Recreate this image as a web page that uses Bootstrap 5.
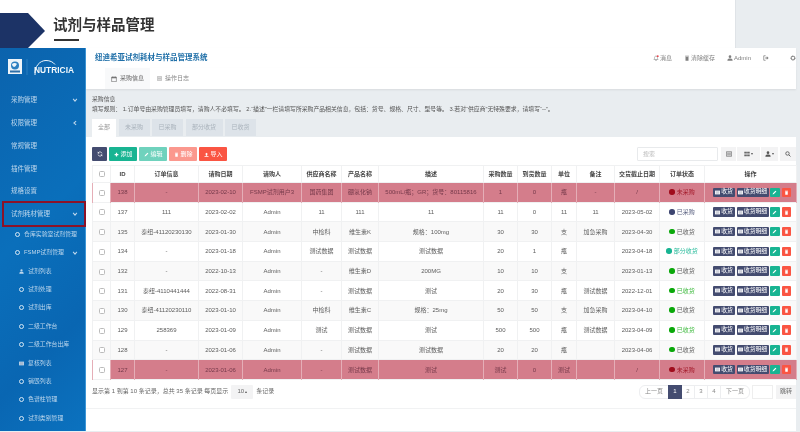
<!DOCTYPE html>
<html lang="zh-CN">
<head>
  <meta charset="UTF-8">
  <title>试剂与样品管理</title>
  <meta name="viewport" content="width=device-width, initial-scale=1">
  <link href="https://cdn.jsdelivr.net/npm/bootstrap@5.3.0/dist/css/bootstrap.min.css" rel="stylesheet">
  <style>
    html, body { height: 100%; }
    body {
      margin: 0;
      overflow: hidden;
      background: #e9edf0;
      font-family: "Liberation Sans", "Noto Sans CJK SC", sans-serif;
      font-size: 6px;
      color: #666;
      filter: blur(.4px);
    }
    svg { display: inline-block; vertical-align: -1px; }

    /* slide title */
    .slide-head { height: 48px; background: #fff; }
    .slide-arrow { margin-top: 13px; }
    .slide-title { margin: 16px 0 0 8px; }
    .slide-title h1 { margin: 0; font-size: 14.5px; line-height: 18px; font-weight: 700; color: #333; }
    .slide-title i { display: block; width: 25px; height: 2px; margin: 5px 0 0 1px; background: #333; }
    .slide-side { width: 65px; background: #e9edf0; border-left: 1px solid #dfe3e7; }

    /* app */
    .app-wrap { height: 383px; margin-right: 4px; }
    .side-menu {
      width: 86px; flex: none;
      background: linear-gradient(135deg, #0b63ad, #0a6fbb 45%, #0966b2 75%, #0b72bf);
      border-right: 1px solid #3d96d6;
      color: #bcd6ec;
    }
    .side-logo { height: 41px; padding: 11px 0 0 8px; }
    .logo-badge { width: 14px; height: 15px; background: #eef4f9; display: flex; align-items: center; justify-content: center; }
    .nutri-name { position: absolute; left: 2px; top: 6px; font-size: 8.4px; font-weight: 700; color: #f2f8fc; line-height: 11px; }
    .menu-one { height: 22.7px; padding: 0 7px 0 11px; font-size: 6.5px; position: relative; }
    .menu-on::after {
      content: ""; position: absolute; left: 2px; top: -1px; right: -1px; bottom: -2px;
      border: 2.5px solid #8c1228;
    }
    .menu-sub { height: 18.4px; font-size: 5.9px; padding-right: 7px; }
    .lv2 { padding-left: 15px; }
    .lv3 { padding-left: 19px; }
    .ring { width: 5px; height: 5px; border: 1.2px solid #d6e7f4; border-radius: 50%; flex: none; margin-right: 4px; }
    .lv3 svg.sub-ico { width: 5px; height: 5px; margin-right: 4px; flex: none; }

    .main-area { min-width: 0; background: #fff; }
    .top-bar { height: 20px; padding: 0 0 0 9px; background: #fff; box-shadow: 0 1px 2px rgba(0,0,0,.06); position: relative; }
    .sys-name { font-size: 7.5px; font-weight: 700; color: #1f6fa8; }
    .top-link { margin-left: 12px; font-size: 6px; color: #808080; display: flex; align-items: center; gap: 1px; }
    .top-cog { margin-left: 21px; color: #777; }
    .tab-bar { height: 21px; padding-left: 19px; background: #fff; box-shadow: 0 1px 2px rgba(0,0,0,.08); position: relative; }
    .tab-one { padding: 0 7px; font-size: 6px; color: #888; display: flex; align-items: center; gap: 3px; white-space: nowrap; }
    .tab-live { width: 45px; padding: 0; justify-content: center; background: #f8f9fa; color: #666; }

    .info-area { height: 48px; background: #e9edf0; padding: 6px 0 0 6px; }
    .info-area p { margin: 0; font-size: 5.85px; line-height: 9.5px; color: #555; }
    .state-tabs { margin-top: 5px; gap: 2.5px; font-size: 6px; }
    .state-tabs span { height: 17px; padding: 0 6.5px; display: flex; align-items: center; background: #dde3e9; color: #a9b2bb; }
    .state-tabs .state-live { background: #fff; color: #999; padding: 0 6px; height: 17.5px; }

    .panel-area { padding: 10px 0 0 6px; background: #fff; }
    .tool-row { height: 14px; margin-bottom: 4px; }
    .tool-left { gap: 2px; }
    .mini-btn {
      --bs-btn-padding-x: 4.5px; --bs-btn-padding-y: 0; --bs-btn-font-size: 6px; --bs-btn-border-radius: 1px;
      height: 14px; border: 0; color: #fff; display: inline-flex; align-items: center; gap: 2px; opacity: 1;
    }
    .btn-navy { background: #444c70; }
    .btn-mint { background: #18b492; }
    .btn-mint-off { background: #6fd2bd; }
    .btn-rose-off { background: #fb988e; }
    .btn-tomato { background: #fa5543; }
    .search-box { width: 81px; height: 14px; min-height: 0; padding: 0 5px; font-size: 6px; border-radius: 1px; border: 1px solid #e8eaec; margin-right: 3px; }
    .search-box::placeholder { color: #bbb; }
    .grey-btn { height: 14px; background: #f3f3f4; border: 0; padding: 0; display: inline-flex; align-items: center; justify-content: center; gap: 1px; color: #555; }
    .col-a { width: 16px; border-right: 1px solid #fff; }
    .col-b { width: 23px; }
    .col-c { width: 18px; border-left: 1px solid #fff; }
    .col-d { width: 16px; margin-left: 2px; }
    .caret-mini { width: 0; height: 0; border: 1.5px solid transparent; border-top: 2px solid #555; border-bottom: 0; }
    .caret-up { border-top: 0; border-bottom: 2px solid #555; }

    .order-table { table-layout: fixed; width: 704px; margin: 0; font-size: 6px; --bs-table-color: #5c5c5c; --bs-table-striped-bg: #f9f9f9; --bs-table-striped-color: #5c5c5c; --bs-table-border-color: #f0f1f2; }
    .order-table th, .order-table td { padding: 0; text-align: center; vertical-align: middle; white-space: nowrap; overflow: hidden; height: 19.7px; line-height: 8px; }
    .order-table th { height: 17px; color: #444; font-weight: 700; }
    .order-table input { width: 6px; height: 6px; margin: 0; border-color: #bbb; border-radius: 1px; vertical-align: middle; }
    .c-chk { width: 18px; } .c-id { width: 24px; } .c-ord { width: 64px; } .c-date { width: 44px; }
    .c-user { width: 59px; } .c-sup { width: 40px; } .c-prod { width: 37px; } .c-desc { width: 105px; }
    .c-num { width: 34px; } .c-unit { width: 25px; } .c-note { width: 38px; } .c-end { width: 45px; } .c-op { width: 92px; }
    .order-table tr.row-pink td { background: #d47d8b; box-shadow: none; color: #75394a; border-color: #e5aeb7; }
    .order-table tr.row-pink td.chk-cell { background: #fff; }
    .dot { display: inline-block; width: 5.5px; height: 5.5px; border-radius: 50%; margin-right: 2px; vertical-align: -.5px; }
    .st-red { color: #a31a2a; } .st-red .dot { background: #a00d1d; }
    .st-navy { color: #5a6180; } .st-navy .dot { background: #3d4570; }
    .st-green { color: #3cb93c; } .st-green .dot { background: #0aa80a; }
    .st-teal { color: #27bb9b; } .st-teal .dot { background: #18b492; }
    .order-table tr.row-pink td.st-red { color: #a31a2a; }
    .op-btns { gap: 1.5px; padding-left: 8px; }
    .op-btn { height: 9.5px; border-radius: 1px; color: #fff; display: inline-flex; align-items: center; justify-content: center; gap: 1px; font-size: 5.8px; font-weight: 400; line-height: 1; }
    .op-get { width: 22px; background: #444c70; }
    .op-list { width: 32px; background: #444c70; }
    .op-edit { width: 9.5px; background: #18b492; }
    .op-del { width: 9px; background: #fa5543; margin-left: 1px; }

    .foot-row { height: 14px; margin-top: 5px; }
    .size-btn { width: 22px; height: 14.5px; margin: 0 3px; background: #f3f3f4; border-radius: 1px; display: inline-flex; align-items: center; justify-content: center; gap: 1px; color: #666; }
    .pager { margin: 0; }
    .pager .page-link { height: 14.5px; padding: 0 5px; display: flex; align-items: center; font-size: 6px; color: #888; border-color: #edeef0; border-radius: 0; background: #fff; }
    .pager .active .page-link { background: #444c70; border-color: #444c70; color: #fff; }
    .w-num .page-link { width: 14px; justify-content: center; padding: 0; }
    .jump-box { width: 21px; height: 14.5px; margin: 0 3px 0 2px; border: 1px solid #eee; background: #fff; }
    .jump-btn { width: 20px; height: 14.5px; background: #f3f3f4; display: flex; align-items: center; justify-content: center; color: #666; }
    .foot-line { height: 1px; background: #f1f2f3; margin: 9px 0 0 -6px; }
  </style>
</head>
<body>

  <svg width="0" height="0" class="position-absolute">
    <symbol id="i-down" viewBox="0 0 8 8"><polyline points="1.5,2.5 4,5.5 6.5,2.5" fill="none" stroke="currentColor" stroke-width="1.4"/></symbol>
    <symbol id="i-left" viewBox="0 0 8 8"><polyline points="5.5,1.5 2.5,4 5.5,6.5" fill="none" stroke="currentColor" stroke-width="1.4"/></symbol>
    <symbol id="i-list" viewBox="0 0 8 8"><path d="M0 1h8v6H0z" fill="currentColor"/><path d="M1 2.500h6M1 4h6M1 5.500h6" stroke="#8a90a8" stroke-width=".6"/></symbol>
    <symbol id="i-pen" viewBox="0 0 8 8"><path d="M1 7l.5-2 4-4 1.500 1.500-4 4z" fill="currentColor"/></symbol>
    <symbol id="i-trash" viewBox="0 0 8 8"><path d="M1.500 1h5v1h-5zM2 2.500h4V7.500H2z" fill="currentColor"/></symbol>
    <symbol id="i-user" viewBox="0 0 8 8"><circle cx="4" cy="2.200" r="1.800" fill="currentColor"/><path d="M.5 7.500c0-2.500 1.500-3 3.500-3s3.500.5 3.500 3z" fill="currentColor"/></symbol>
    <symbol id="i-up" viewBox="0 0 8 8"><path d="M4 1l2.500 2.500H5V6H3V3.500H1.500zM.8 6.300h6.400v1.200H.8z" fill="currentColor"/></symbol>
    <symbol id="i-plus" viewBox="0 0 8 8"><path d="M3 1h2v2h2v2H5v2H3V5H1V3h2z" fill="currentColor"/></symbol>
    <symbol id="i-grid" viewBox="0 0 8 8"><path d="M.5 1h2v1.500h-2zM3 1h2v1.500H3zM5.500 1h2v1.500h-2zM.5 3.200h2v1.500h-2zM3 3.200h2v1.500H3zM5.500 3.200h2v1.500h-2zM.5 5.400h2v1.500h-2zM3 5.400h2v1.500H3zM5.500 5.400h2v1.500h-2z" fill="currentColor"/></symbol>
    <symbol id="i-cal" viewBox="0 0 8 8"><path d="M.8 1.500h6.400v6H.8z" fill="none" stroke="currentColor" stroke-width=".8"/><path d="M.8 1.500h6.400v1.500H.8zM2 .5h1v1.500H2zM5 .5h1v1.500H5z" fill="currentColor"/></symbol>
    <symbol id="i-log" viewBox="0 0 8 8"><path d="M.5 1h7v6h-7z" fill="none" stroke="currentColor" stroke-width=".8"/><path d="M1.500 2.800h5M1.500 4h5M1.500 5.200h5" stroke="currentColor" stroke-width=".6"/></symbol>
    <symbol id="i-bell" viewBox="0 0 8 8"><path d="M1.200 6c.8-.8.8-1.500.8-2.500 0-1.300.8-2 2-2s2 .7 2 2c0 1 0 1.700.8 2.500zM3.200 6.600h1.600L4 7.600z" fill="none" stroke="currentColor" stroke-width=".7"/><circle cx="6.300" cy="1.500" r="1.300" fill="#e8414a"/></symbol>
    <symbol id="i-exit" viewBox="0 0 8 8"><path d="M3.500 1H1v6h2.500" fill="none" stroke="currentColor" stroke-width="1"/><path d="M3 3.200h2V1.800L7.500 4 5 6.200V4.800H3z" fill="currentColor"/></symbol>
    <symbol id="i-cog" viewBox="0 0 8 8"><circle cx="4" cy="4" r="2.400" fill="none" stroke="currentColor" stroke-width="1.400" stroke-dasharray="1.200 .3"/><circle cx="4" cy="4" r="2.900" fill="none" stroke="currentColor" stroke-width=".8" stroke-dasharray="1.100 1.200"/></symbol>
    <symbol id="i-sync" viewBox="0 0 8 8"><path d="M6.600 3.200A2.800 2.800 0 0 0 1.800 2.200M1.400 4.800a2.800 2.800 0 0 0 4.800 1" fill="none" stroke="currentColor" stroke-width="1"/><path d="M1 .8v2.400h2.400zM7 7.200V4.800H4.600z" fill="currentColor"/></symbol>
  </svg>

  <div class="slide-head d-flex">
    <svg class="slide-arrow" width="45" height="35" viewBox="0 0 45 35"><polygon points="0,0 28,0 45,18 28,35 0,35" fill="#1c3366"/></svg>
    <div class="slide-title">
      <h1>试剂与样品管理</h1>
      <i></i>
    </div>
    <div class="slide-side ms-auto"></div>
  </div>

  <div class="app-wrap d-flex">
    <aside class="side-menu">
      <div class="side-logo d-flex">
        <div class="logo-badge">
          <svg width="10" height="12" viewBox="0 0 10 12"><circle cx="5" cy="4.500" r="4" fill="#2d7fc0"/><path d="M2 3c2-1.500 4-1 5 0-1 1-1 2.500-3 3-1-.5-2-1.500-2-3z" fill="#eef4f9"/><rect x="0" y="9.500" width="10" height="2" fill="#2d6fa8"/></svg>
        </div>
        <svg class="ms-1" width="6" height="16" viewBox="0 0 6 16"><path d="M1 0v16" stroke="#5ea3d8" stroke-width=".4"/></svg>
        <div class="position-relative">
          <svg class="d-block" width="44" height="18" viewBox="0 0 44 18"><path d="M3 16C2.500 7 8 1.500 14 1.500c4 0 7 1.500 9 4" fill="none" stroke="#eef6fc" stroke-width="1"/></svg>
          <span class="nutri-name">NUTRICIA</span>
        </div>
      </div>
      <div class="menu-one d-flex align-items-center justify-content-between"><span>采购管理</span><svg width="6" height="6"><use href="#i-down"/></svg></div>
      <div class="menu-one d-flex align-items-center justify-content-between"><span>权限管理</span><svg width="6" height="6"><use href="#i-left"/></svg></div>
      <div class="menu-one d-flex align-items-center"><span>常规管理</span></div>
      <div class="menu-one d-flex align-items-center"><span>插件管理</span></div>
      <div class="menu-one d-flex align-items-center"><span>规格设置</span></div>
      <div class="menu-one menu-on d-flex align-items-center justify-content-between"><span>试剂耗材管理</span><svg width="6" height="6"><use href="#i-down"/></svg></div>
      <div class="menu-sub lv2 d-flex align-items-center"><i class="ring"></i>仓库实验室试剂管理</div>
      <div class="menu-sub lv2 d-flex align-items-center"><i class="ring"></i>FSMP试剂管理<svg class="ms-auto" width="6" height="6"><use href="#i-down"/></svg></div>
      <div class="menu-sub lv3 d-flex align-items-center"><svg class="sub-ico"><use href="#i-user"/></svg>试剂列表</div>
      <div class="menu-sub lv3 d-flex align-items-center"><i class="ring"></i>试剂处理</div>
      <div class="menu-sub lv3 d-flex align-items-center"><i class="ring"></i>试剂出库</div>
      <div class="menu-sub lv3 d-flex align-items-center"><i class="ring"></i>二级工作台</div>
      <div class="menu-sub lv3 d-flex align-items-center"><i class="ring"></i>二级工作台出库</div>
      <div class="menu-sub lv3 d-flex align-items-center"><svg class="sub-ico"><use href="#i-list"/></svg>复核列表</div>
      <div class="menu-sub lv3 d-flex align-items-center"><i class="ring"></i>销毁列表</div>
      <div class="menu-sub lv3 d-flex align-items-center"><i class="ring"></i>色谱柱管理</div>
      <div class="menu-sub lv3 d-flex align-items-center"><i class="ring"></i>试剂类别管理</div>
    </aside>

    <main class="main-area flex-grow-1">
      <div class="top-bar d-flex align-items-center">
        <span class="sys-name me-auto">纽迪希亚试剂耗材与样品管理系统</span>
        <span class="top-link"><svg width="6" height="6"><use href="#i-bell"/></svg>消息</span>
        <span class="top-link"><svg width="6" height="6"><use href="#i-trash"/></svg>清除缓存</span>
        <span class="top-link"><svg width="6" height="6"><use href="#i-user"/></svg>Admin</span>
        <span class="top-link"><svg width="6" height="6"><use href="#i-exit"/></svg></span>
        <span class="top-cog"><svg width="6" height="6"><use href="#i-cog"/></svg></span>
      </div>
      <div class="tab-bar d-flex">
        <div class="tab-one tab-live"><svg width="6" height="6"><use href="#i-cal"/></svg>采购信息</div>
        <div class="tab-one"><svg width="5" height="5"><use href="#i-log"/></svg>操作日志</div>
      </div>
      <div class="info-area">
        <p>采购信息</p>
        <p>填写规则： 1.订单号由采购管理员填写，请购人不必填写。 2.“描述”一栏请填写所采购产品相关信息，包括：货号、规格、尺寸、型号等。 3.若对“供应商”无特殊要求，请填写“--”。</p>
        <div class="state-tabs d-flex">
          <span class="state-live">全部</span><span>未采购</span><span>已采购</span><span>部分收货</span><span>已收货</span>
        </div>
      </div>
      <div class="panel-area">
        <div class="tool-row d-flex align-items-center justify-content-between">
          <div class="tool-left d-flex">
            <span class="btn mini-btn btn-navy"><svg width="6" height="6"><use href="#i-sync"/></svg></span>
            <span class="btn mini-btn btn-mint"><svg width="5" height="5"><use href="#i-plus"/></svg>添加</span>
            <span class="btn mini-btn btn-mint-off"><svg width="5" height="5"><use href="#i-pen"/></svg>编辑</span>
            <span class="btn mini-btn btn-rose-off"><svg width="5" height="5"><use href="#i-trash"/></svg>删除</span>
            <span class="btn mini-btn btn-tomato"><svg width="5" height="5"><use href="#i-up"/></svg>导入</span>
          </div>
          <div class="d-flex">
            <input class="form-control search-box" placeholder="搜索">
            <span class="grey-btn col-a"><svg width="6" height="6"><use href="#i-log"/></svg></span>
            <span class="grey-btn col-b"><svg width="6" height="6"><use href="#i-grid"/></svg><i class="caret-mini"></i></span>
            <span class="grey-btn col-c"><svg width="6" height="6"><use href="#i-user"/></svg><i class="caret-mini"></i></span>
            <span class="grey-btn col-d"><svg width="6" height="6" viewBox="0 0 8 8"><circle cx="3.300" cy="3.300" r="2.300" fill="none" stroke="currentColor" stroke-width="1.100"/><path d="M5 5l2.300 2.300" stroke="currentColor" stroke-width="1.200"/></svg></span>
          </div>
        </div>

        <table class="table table-bordered table-striped order-table">
          <colgroup>
            <col class="c-chk"><col class="c-id"><col class="c-ord"><col class="c-date"><col class="c-user"><col class="c-sup"><col class="c-prod"><col class="c-desc"><col class="c-num"><col class="c-num"><col class="c-unit"><col class="c-note"><col class="c-end"><col class="c-end"><col class="c-op">
          </colgroup>
          <thead>
            <tr><th><input type="checkbox" class="form-check-input"></th><th>ID</th><th>订单信息</th><th>请购日期</th><th>请购人</th><th>供应商名称</th><th>产品名称</th><th>描述</th><th>采购数量</th><th>到货数量</th><th>单位</th><th>备注</th><th>交货截止日期</th><th>订单状态</th><th>操作</th></tr>
          </thead>
          <tbody id="rows"></tbody>
        </table>

        <div class="foot-row d-flex align-items-center">
          <span>显示第 1 到第 10 条记录，总共 35 条记录 每页显示</span>
          <span class="size-btn">10 <i class="caret-mini caret-up"></i></span>
          <span>条记录</span>
          <ul class="pagination pager ms-auto">
            <li class="page-item"><span class="page-link">上一页</span></li>
            <li class="page-item w-num active"><span class="page-link">1</span></li>
            <li class="page-item w-num"><span class="page-link">2</span></li>
            <li class="page-item w-num"><span class="page-link">3</span></li>
            <li class="page-item w-num"><span class="page-link">4</span></li>
            <li class="page-item"><span class="page-link">下一页</span></li>
          </ul>
          <span class="jump-box"></span>
          <span class="jump-btn">跳转</span>
        </div>
        <div class="foot-line"></div>
      </div>
    </main>
  </div>

  <script>
    const data = [
      [138, "-", "2023-02-10", "FSMP试剂用户3", "国药集团", "硼氢化钠", "500mL/瓶；GR；货号：80115816", "1", "0", "瓶", "-", "/", "red"],
      [137, "111", "2023-02-02", "Admin", "11", "111", "11", "11", "0", "11", "11", "2023-05-02", "navy"],
      [135, "泰纽-41120230130", "2023-01-30", "Admin", "中检科", "维生素K", "规格：100mg", "30", "30", "支", "加急采购", "2023-04-30", "green"],
      [134, "-", "2023-01-18", "Admin", "测试数据", "测试数据", "测试数据", "20", "1", "瓶", "", "2023-04-18", "teal"],
      [132, "-", "2022-10-13", "Admin", "-", "维生素D", "200MG", "10", "10", "支", "", "2023-01-13", "green"],
      [131, "泰纽-4110441444", "2022-08-31", "Admin", "-", "测试数据", "测试", "20", "30", "瓶", "测试数据", "2022-12-01", "green"],
      [130, "泰纽-41120230110", "2023-01-10", "Admin", "中检科", "维生素C", "规格：25mg", "50", "50", "支", "加急采购", "2023-04-10", "green"],
      [129, "258369", "2023-01-09", "Admin", "测试", "测试数据", "测试", "500", "500", "瓶", "测试数据", "2023-04-09", "green"],
      [128, "-", "2023-01-06", "Admin", "-", "测试数据", "测试数据", "20", "20", "瓶", "", "2023-04-06", "green"],
      [127, "-", "2023-01-06", "Admin", "-", "测试数据", "测试", "测试", "0", "测试", "", "/", "red"]
    ];
    const stateText = { red: "未采购", navy: "已采购", green: "已收货", teal: "部分收货" };
    const listIcon = '<svg width="5" height="5"><use href="#i-list"/></svg>';

    document.getElementById("rows").innerHTML = data.map(r => {
      const cells = r.slice(0, 12).map(v => `<td>${v}</td>`).join("");
      const st = r[12];
      return `<tr class="${st === "red" ? "row-pink" : ""}">
        <td class="chk-cell"><input type="checkbox" class="form-check-input"></td>${cells}
        <td class="st-${st}"><i class="dot"></i>${stateText[st]}</td>
        <td><div class="op-btns d-flex align-items-center">
          <span class="op-btn op-get">${listIcon}收货</span>
          <span class="op-btn op-list">${listIcon}收货明细</span>
          <span class="op-btn op-edit"><svg width="5" height="5"><use href="#i-pen"/></svg></span>
          <span class="op-btn op-del"><svg width="5" height="5"><use href="#i-trash"/></svg></span>
        </div></td>
      </tr>`;
    }).join("");
  </script>
  <script src="https://cdn.jsdelivr.net/npm/bootstrap@5.3.0/dist/js/bootstrap.bundle.min.js"></script>
</body>
</html>
